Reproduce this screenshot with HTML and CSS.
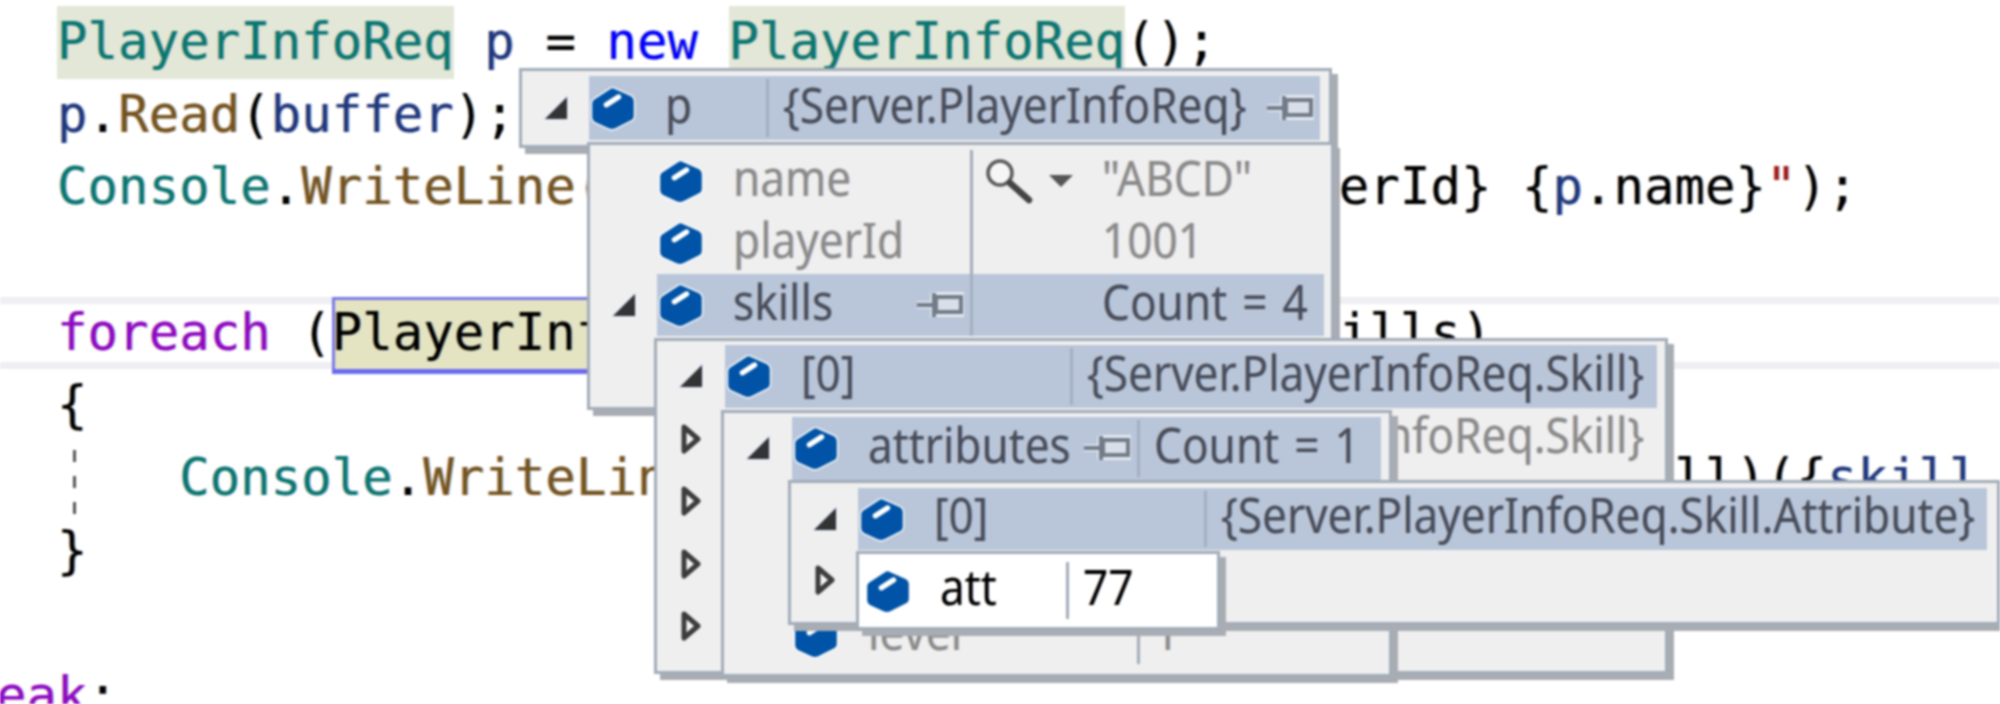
FILE: index.html
```html
<!DOCTYPE html>
<html lang="en">
<head>
<meta charset="utf-8">
<title>Debugger data tips</title>
<link rel="stylesheet" href="styles.css">
</head>
<body>
<svg class="defs" aria-hidden="true">
  <symbol id="cube" viewBox="0 0 42 42">
    <path d="M21 3 L37 10 Q40 11.500 40 15 V28 Q40 31 37 32.500 L23 39.500 Q20 41 17 39.500 L5 34 Q2 32.500 2 29 V17 Q2 14 5 12.500 L18 4 Q19.500 3 21 3 Z" fill="#0053a6" stroke="#fff" stroke-width="2.500" paint-order="stroke"/>
    <path d="M15 18 L26 11" stroke="#fff" stroke-width="5" stroke-linecap="round"/>
  </symbol>
  <symbol id="pin" viewBox="0 0 48 28">
    <path d="M1 14 H17 M18 2 V26" stroke="#e4e9f1" stroke-width="7"/>
    <rect x="20" y="5" width="26" height="17" fill="#d9dfe9" stroke="#e4e9f1" stroke-width="8"/>
    <path d="M1 14 H17 M18 2 V26" stroke="#727b88" stroke-width="4"/>
    <rect x="20" y="6" width="25" height="15" fill="#d9dfe9" stroke="#727b88" stroke-width="4"/>
  </symbol>
  <symbol id="collapse" viewBox="0 0 28 28">
    <polygon points="25,3 25,25 3,25" fill="#333" stroke="#dde5fb" stroke-width="2" paint-order="stroke"/>
  </symbol>
  <symbol id="expand" viewBox="0 0 20 32">
    <polygon points="3,4 17,16 3,28" fill="#f4f4f4" stroke="#3c3c3c" stroke-width="5" stroke-linejoin="round"/>
  </symbol>
  <symbol id="lens" viewBox="0 0 50 45">
    <circle cx="17" cy="14" r="12" fill="#f6f6f6" stroke="#5a5a5a" stroke-width="3.500"/>
    <path d="M27 24 L46 41" stroke="#444" stroke-width="6.500" stroke-linecap="round"/>
  </symbol>
  <symbol id="drop" viewBox="0 0 26 14">
    <polygon points="1,1 25,1 13,13" fill="#555"/>
  </symbol>
</svg>

<main class="stage">
  <div class="code">
    <div class="line">    <span class="hl type">PlayerInfoReq</span> <span class="var">p</span> = <span class="kw">new</span> <span class="hl type">PlayerInfoReq</span>();</div>
    <div class="line">    <span class="var">p</span>.<span class="fn">Read</span>(<span class="var">buffer</span>);</div>
    <div class="line">    <span class="type">Console</span>.<span class="fn">WriteLine</span>(<span class="str">$"PlayerInfoReq: </span>{<span class="var">p</span>.playerId} {<span class="var">p</span>.name}<span class="str">"</span>);</div>
    <div class="line"></div>
    <div class="line current">    <span class="ctl">foreach</span> (<span class="ref">PlayerInfoReq.Skill</span> <span class="var">skill</span> <span class="ctl">in</span> <span class="var">p</span>.skills)</div>
    <div class="line">    {</div>
    <div class="line">        <span class="type">Console</span>.<span class="fn">WriteLine</span>(<span class="str">$"Skill </span>{skill.id} {skill.id} all)({<span class="var">skill</span>.level})<span class="str">"</span>);</div>
    <div class="line">    }</div>
    <div class="line"></div>
    <div class="line"><span class="ctl">break</span>;</div>
  </div>
  <div class="guide"></div>

  <!-- p -->
  <section class="tip t-root">
    <div class="row">
      <span class="gut"><svg class="tri"><use href="#collapse"/></svg></span>
      <div class="cells sel">
        <div class="name"><svg class="ico"><use href="#cube"/></svg><span class="label">p</span></div>
        <div class="val"><span class="txt">{Server.PlayerInfoReq}</span><svg class="pin"><use href="#pin"/></svg></div>
      </div>
    </div>
  </section>

  <!-- members of p -->
  <section class="tip t-members">
    <div class="row">
      <span class="gut"></span>
      <div class="cells">
        <div class="name"><svg class="ico"><use href="#cube"/></svg><span class="label">name</span></div>
        <div class="val"><span class="tools"><svg class="lens"><use href="#lens"/></svg><svg class="drop"><use href="#drop"/></svg></span><span class="txt">"ABCD"</span></div>
      </div>
    </div>
    <div class="row">
      <span class="gut"></span>
      <div class="cells">
        <div class="name"><svg class="ico"><use href="#cube"/></svg><span class="label">playerId</span></div>
        <div class="val"><span class="tools"></span><span class="txt">1001</span></div>
      </div>
    </div>
    <div class="row">
      <span class="gut"><svg class="tri"><use href="#collapse"/></svg></span>
      <div class="cells sel">
        <div class="name"><svg class="ico"><use href="#cube"/></svg><span class="label">skills</span><svg class="pin"><use href="#pin"/></svg></div>
        <div class="val"><span class="tools"></span><span class="txt">Count = 4</span></div>
      </div>
    </div>
  </section>

  <!-- skills -->
  <section class="tip t-skills">
    <div class="row">
      <span class="gut"><svg class="tri"><use href="#collapse"/></svg></span>
      <div class="cells sel">
        <div class="name"><svg class="ico"><use href="#cube"/></svg><span class="label">[0]</span></div>
        <div class="val"><span class="txt">{Server.PlayerInfoReq.Skill}</span></div>
      </div>
    </div>
    <div class="row">
      <span class="gut"><svg class="arr"><use href="#expand"/></svg></span>
      <div class="cells">
        <div class="name"><svg class="ico"><use href="#cube"/></svg><span class="label">[1]</span></div>
        <div class="val"><span class="txt">{Server.PlayerInfoReq.Skill}</span></div>
      </div>
    </div>
    <div class="row">
      <span class="gut"><svg class="arr"><use href="#expand"/></svg></span>
      <div class="cells">
        <div class="name"><svg class="ico"><use href="#cube"/></svg><span class="label">[2]</span></div>
        <div class="val"></div>
      </div>
    </div>
    <div class="row">
      <span class="gut"><svg class="arr"><use href="#expand"/></svg></span>
      <div class="cells">
        <div class="name"><svg class="ico"><use href="#cube"/></svg><span class="label">[3]</span></div>
        <div class="val"></div>
      </div>
    </div>
    <div class="row">
      <span class="gut"><svg class="arr"><use href="#expand"/></svg></span>
      <div class="cells">
        <div class="name"></div>
        <div class="val"></div>
      </div>
    </div>
  </section>

  <!-- skills[0] -->
  <section class="tip t-skill">
    <div class="row">
      <span class="gut"><svg class="tri"><use href="#collapse"/></svg></span>
      <div class="cells sel">
        <div class="name"><svg class="ico"><use href="#cube"/></svg><span class="label">attributes</span><svg class="pin"><use href="#pin"/></svg></div>
        <div class="val"><span class="txt">Count = 1</span></div>
      </div>
    </div>
    <div class="row">
      <span class="gut"></span>
      <div class="cells"><div class="name"></div><div class="val"></div></div>
    </div>
    <div class="row">
      <span class="gut"></span>
      <div class="cells"><div class="name"></div><div class="val"></div></div>
    </div>
    <div class="row">
      <span class="gut"></span>
      <div class="cells">
        <div class="name"><svg class="ico"><use href="#cube"/></svg><span class="label">level</span></div>
        <div class="val"><span class="txt">1</span></div>
      </div>
    </div>
  </section>

  <!-- attributes -->
  <section class="tip t-attrs">
    <div class="row">
      <span class="gut"><svg class="tri"><use href="#collapse"/></svg></span>
      <div class="cells sel">
        <div class="name"><svg class="ico"><use href="#cube"/></svg><span class="label">[0]</span></div>
        <div class="val"><span class="txt">{Server.PlayerInfoReq.Skill.Attribute}</span></div>
      </div>
    </div>
    <div class="row">
      <span class="gut"><svg class="arr"><use href="#expand"/></svg></span>
      <div class="cells"><div class="name"></div><div class="val"></div></div>
    </div>
  </section>

  <!-- attributes[0] -->
  <section class="tip t-att">
    <div class="row">
      <div class="cells">
        <div class="name"><svg class="ico"><use href="#cube"/></svg><span class="label">att</span></div>
        <div class="val"><span class="txt">77</span></div>
      </div>
    </div>
  </section>
</main>
</body>
</html>
```
FILE: styles.css
```css
html, body {
  margin: 0;
  padding: 0;
  width: 2000px;
  height: 704px;
  overflow: hidden;
  background: #fff;
}

.defs {
  position: absolute;
  width: 0;
  height: 0;
}

.stage {
  position: relative;
  width: 2000px;
  height: 704px;
  overflow: hidden;
  filter: blur(1.2px);
}

/* code editor */
.code {
  margin-left: -65px;
  padding-top: 6px;
  width: 2200px;
  font-family: "DejaVu Sans Mono", monospace;
  font-size: 50.7px;
  line-height: 72.7px;
  color: #000;
  text-shadow: -1.2px 0 rgba(230, 130, 0, .3), 1.2px 0 rgba(0, 110, 240, .3);
}

.line {
  height: 72.7px;
  white-space: pre;
}

.current {
  box-shadow: inset 0 7px 0 #eeeef3, inset 0 -7px 0 #eeeef3;
}

.type { color: #0a7672; }
.kw { color: #0000ff; }
.var { color: #1f377f; }
.fn { color: #74531f; }
.ctl { color: #8f08c4; }
.str { color: #a31515; }

.hl {
  display: inline-block;
  background: #e3e7d7;
}

.ref {
  display: inline-block;
  background: #e4e4c2;
  box-shadow: inset 3px 0 0 #7a7ae6, inset 0 3px 0 #7a7ae6, 0 5px 0 #6a6af0;
}

.guide {
  position: absolute;
  left: 73px;
  top: 450px;
  width: 3px;
  height: 66px;
  background: repeating-linear-gradient(#555 0 12px, transparent 12px 26px);
}

/* data tips */
.tip {
  position: absolute;
  box-sizing: border-box;
  border: 3px solid #a2acb9;
  background: #efefef;
  box-shadow: 6px 6px 0 #a9adb3;
  font-family: "Noto Sans", "Liberation Sans", sans-serif;
  font-size: 50px;
  line-height: 1;
  color: #8a8a8a;
  text-shadow: -1px 0 rgba(220, 130, 40, .22), 1px 0 rgba(40, 110, 230, .22);
}

.row {
  display: flex;
  height: var(--row);
}

.gut {
  flex: none;
  width: var(--gut);
  display: flex;
  align-items: center;
  justify-content: center;
}

.cells {
  flex: 1;
  min-width: 0;
  display: flex;
  align-items: stretch;
}

.sel {
  background: #b9c6d9;
  color: #474c59;
}

.name {
  flex: none;
  box-sizing: border-box;
  width: var(--name);
  padding-right: 6px;
  display: flex;
  align-items: center;
}

.ico {
  flex: none;
  width: 46px;
  height: 46px;
  margin-left: 1px;
}

/* Segoe-like narrow setting: text is squeezed sideways from its left edge */
.label,
.txt {
  min-width: 0;
  padding-bottom: 9px;
  white-space: nowrap;
  word-spacing: 4px;
  transform: scaleX(.883);
  transform-origin: left center;
}

.label {
  flex: 1;
  margin-left: 29px;
}

.txt {
  flex: 0 1 auto;
}

.val {
  flex: 1;
  min-width: 0;
  margin: 3px 0;
  padding-left: 14px;
  padding-right: 6px;
  border-left: 3px solid #a2acb9;
  display: flex;
  align-items: center;
  justify-content: space-between;
}

.sel .val { border-left-color: #a3afc1; }

.pin {
  flex: none;
  width: 48px;
  height: 28px;
}

.tri {
  width: 28px;
  height: 28px;
}

.arr {
  width: 20px;
  height: 32px;
}

.tools {
  flex: none;
  width: 119px;
  display: flex;
  align-items: center;
}

.lens {
  width: 50px;
  height: 45px;
  margin-right: 15px;
}

.drop {
  width: 26px;
  height: 14px;
}

.t-root {
  left: 519px;
  top: 68px;
  width: 813px;
  height: 80px;
  padding: 5px 9px 5px 0;
  --row: 64px;
  --gut: 67px;
  --name: 177px;
}

.t-members {
  left: 587px;
  top: 142px;
  width: 747px;
  height: 268px;
  padding: 5px 7px 0 0;
  --row: 62px;
  --gut: 67px;
  --name: 313px;
}

.t-members .val {
  margin: 0;
  padding-left: 10px;
  justify-content: flex-start;
}

.t-skills {
  left: 654px;
  top: 338px;
  width: 1014px;
  height: 336px;
  padding: 4px 8px 0 0;
  --row: 62.5px;
  --gut: 68px;
  --name: 345px;
}

.t-skill {
  left: 721px;
  top: 410px;
  width: 671px;
  height: 267px;
  padding: 4px 8px 0 0;
  --row: 62.5px;
  --gut: 68px;
  --name: 345px;
}

.t-attrs {
  left: 788px;
  top: 480px;
  width: 1212px;
  height: 145px;
  padding: 5px 10px 0 0;
  --row: 61.5px;
  --gut: 67px;
  --name: 346px;
}

.t-att {
  left: 856px;
  top: 551px;
  width: 364px;
  height: 79px;
  padding: 0;
  background: #fff;
  color: #000;
  --row: 73px;
  --name: 207px;
}

.t-att .ico { margin-left: 6px; }
.t-att .val { margin: 8px 0; }
```
